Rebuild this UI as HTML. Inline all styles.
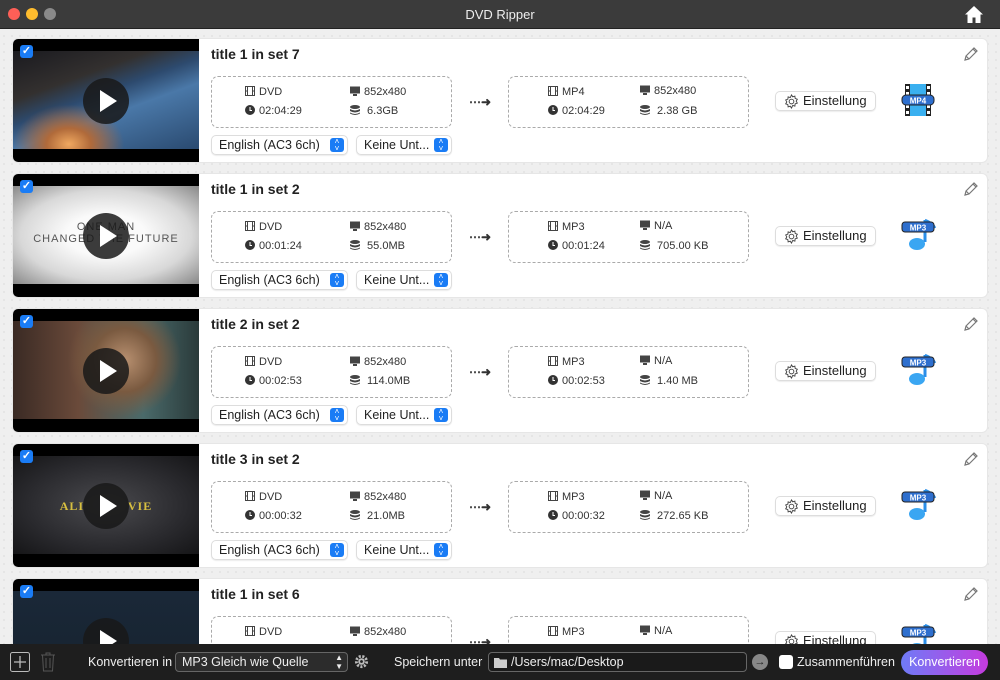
<!DOCTYPE html><html><head><meta charset="utf-8"><style>
*{margin:0;padding:0;box-sizing:border-box}
html{width:1000px;height:680px;overflow:hidden}
body{width:1000px;height:680px;overflow:hidden;font-family:"Liberation Sans",Arial,sans-serif;background:#efefef;background-image:radial-gradient(#e2e2e2 1px,transparent 1px);background-size:8px 8px;position:relative;color:#222}
.tb{position:absolute;left:0;top:0;width:1000px;height:29px;background:#3b3b3b;border-bottom:1px solid #222;color:#eee;font-size:13px;text-align:center;line-height:29px}
.dot{position:absolute;top:8px;width:12px;height:12px;border-radius:50%}
.card{position:absolute;left:12px;width:976px;height:125px;background:#fff;border-radius:6px;overflow:hidden;border:1px solid #e6e6e6}
.th{position:absolute;left:0;top:0;width:186px;height:125px;background:#000}
.img{position:absolute;left:0;top:12px;width:186px;height:98px;overflow:hidden}
.play{position:absolute;left:70px;top:39px;width:46px;height:46px;border-radius:50%;background:rgba(25,25,25,.85)}
.play:after{content:"";position:absolute;left:17px;top:12px;border-left:17px solid #fff;border-top:11px solid transparent;border-bottom:11px solid transparent}
.cb{position:absolute;left:7px;top:6px;width:13px;height:13px;background:#1a7cf5;border-radius:3px;color:#fff;font-size:11px;line-height:13px;text-align:center;font-weight:bold}
.t{position:absolute;left:198px;top:7px;font-size:14px;font-weight:bold;color:#222}
.box{position:absolute;top:37px;width:241px;height:52px;border:1px dashed #aaa;border-radius:7px;font-size:11px;color:#333}
.box span{position:absolute}
.ic{display:inline-block;width:10px;height:10px;vertical-align:-1px;margin-right:4px}
.arr{position:absolute;left:456px;top:56px;font-size:12px;color:#333;font-weight:bold}
.btn{position:absolute;left:762px;top:52px;width:101px;height:20px;border:1px solid #ddd;border-radius:5px;font-size:13px;line-height:18px;padding-left:27px;color:#222;box-shadow:0 1px 1px rgba(0,0,0,.08)}
.dd{position:absolute;top:96px;height:20px;border:1px solid #ddd;border-radius:5px;font-size:12.5px;line-height:18px;padding-left:7px;box-shadow:0 1px 1px rgba(0,0,0,.08)}
.ud{position:absolute;right:3px;top:2px;width:14px;height:14px;background:#1a7cf5;border-radius:3px;color:#fff;font-size:8px;line-height:7px;text-align:center}
.pen{position:absolute;left:950px;top:7px}
.fmt{position:absolute;left:888px;top:44px}
.bot{position:absolute;left:0;top:644px;width:1000px;height:36px;background:#1e1e1e;color:#eee;font-size:12.5px;z-index:5}
.bot>*{position:absolute}
</style></head><body>
<div class="tb">DVD Ripper
<div class="dot" style="left:8px;background:#fe5f57"></div><div class="dot" style="left:26px;background:#febc2e"></div><div class="dot" style="left:44px;background:#8a8a8a"></div>
<svg style="position:absolute;left:964px;top:5px" width="20" height="19" viewBox="0 0 20 19"><path d="M10 1L1 9.5h2.5V18h5v-5.5h3V18h5V9.5H19z" fill="#fff"/></svg></div>

<div class="card" style="top:38px">
<div class="th"><div class="img" style="background:radial-gradient(ellipse at 30% 95%,#f0a860 0%,#b06a3a 12%,transparent 30%),linear-gradient(160deg,#1a1a1f 0%,#33302f 30%,#2d4a6e 45%,#4a78a8 60%,#2a4a70 100%)"></div><div class="play"></div><div class="cb">✓</div></div>
<div class="t">title 1 in set 7</div>
<div class="box" style="left:198px"><span style="left:33px;top:9px"><svg class="ic" viewBox="0 0 10 10"><rect x="0.5" y="0.5" width="9" height="9" fill="none" stroke="#444"/><path d="M2.5 0v10M7.5 0v10M0 5h2.5M7.5 5H10" stroke="#444"/></svg>DVD</span><span style="left:138px;top:9px"><svg class="ic" viewBox="0 0 10 10"><rect x="0" y="0.5" width="10" height="7" fill="#444"/><rect x="3" y="8" width="4" height="2" fill="#444"/></svg>852x480</span><span style="left:33px;top:28px"><svg class="ic" viewBox="0 0 10 10"><circle cx="5" cy="5" r="5" fill="#333"/><path d="M5 2v3.5h2" stroke="#fff" fill="none"/></svg>02:04:29</span><span style="left:138px;top:28px"><svg class="ic" viewBox="0 0 10 10"><ellipse cx="5" cy="2" rx="5" ry="2" fill="#444"/><path d="M0 4q5 3 10 0v2q-5 3-10 0zM0 7.5q5 3 10 0v1q-5 3-10 0z" fill="#444"/></svg>&nbsp;6.3GB</span></div>
<div class="arr">⋯➜</div>
<div class="box" style="left:495px"><span style="left:39px;top:9px"><svg class="ic" viewBox="0 0 10 10"><rect x="0.5" y="0.5" width="9" height="9" fill="none" stroke="#444"/><path d="M2.5 0v10M7.5 0v10M0 5h2.5M7.5 5H10" stroke="#444"/></svg>MP4</span><span style="left:131px;top:8px"><svg class="ic" viewBox="0 0 10 10"><rect x="0" y="0.5" width="10" height="7" fill="#444"/><rect x="3" y="8" width="4" height="2" fill="#444"/></svg>852x480</span><span style="left:39px;top:28px"><svg class="ic" viewBox="0 0 10 10"><circle cx="5" cy="5" r="5" fill="#333"/><path d="M5 2v3.5h2" stroke="#fff" fill="none"/></svg>02:04:29</span><span style="left:131px;top:28px"><svg class="ic" viewBox="0 0 10 10"><ellipse cx="5" cy="2" rx="5" ry="2" fill="#444"/><path d="M0 4q5 3 10 0v2q-5 3-10 0zM0 7.5q5 3 10 0v1q-5 3-10 0z" fill="#444"/></svg>&nbsp;2.38 GB</span></div>
<div class="btn"><svg style="position:absolute;left:8px;top:2px" width="15" height="15" viewBox="0 0 16 16"><circle cx="8" cy="8" r="2.5" fill="none" stroke="#444"/><path d="M8 1l1.3 2 2.3-.7.3 2.4 2.3.9-1.2 2 1.2 2.1-2.3.8-.3 2.4-2.3-.7L8 15l-1.3-2-2.3.7-.3-2.4-2.3-.8 1.2-2.1-1.2-2 2.3-.9.3-2.4 2.3.7z" fill="none" stroke="#444"/></svg>Einstellung</div>
<div class="dd" style="left:198px;width:137px">English (AC3 6ch)<div class="ud">˄<br>˅</div></div>
<div class="dd" style="left:343px;width:96px">Keine Unt...<div class="ud">˄<br>˅</div></div>
<svg class="pen" width="16" height="16" viewBox="0 0 16 16"><path d="M2 14l1-4L11 2l3 3-8 8zM10 3l3 3M3 10l3 3" fill="none" stroke="#777" stroke-width="1.2"/></svg>
<svg class="fmt" width="34" height="34" viewBox="0 0 34 34"><rect x="4" y="1" width="26" height="32" fill="#222"/><rect x="9" y="1" width="16" height="32" fill="#3ab0f0"/><path d="M5 3h3v3H5zM5 9h3v3H5zM5 22h3v3H5zM5 28h3v3H5zM26 3h3v3h-3zM26 9h3v3h-3zM26 22h3v3h-3zM26 28h3v3h-3z" fill="#fff"/><rect x="1" y="12" width="32" height="10" rx="4" fill="#2e6fce" stroke="#222"/><text x="17" y="20.5" font-size="8" font-weight="bold" fill="#fff" text-anchor="middle" font-family="Liberation Sans">MP4</text></svg>
</div>

<div class="card" style="top:173px">
<div class="th"><div class="img" style="background:radial-gradient(ellipse at center,#fafafa 30%,#d8d8d8 65%,#888 100%)"><div style="position:absolute;left:0;width:186px;top:35px;text-align:center;font-size:11px;letter-spacing:1px;color:#555;line-height:12px">ONE MAN<br>CHANGED THE FUTURE</div></div><div class="play"></div><div class="cb">✓</div></div>
<div class="t">title 1 in set 2</div>
<div class="box" style="left:198px"><span style="left:33px;top:9px"><svg class="ic" viewBox="0 0 10 10"><rect x="0.5" y="0.5" width="9" height="9" fill="none" stroke="#444"/><path d="M2.5 0v10M7.5 0v10M0 5h2.5M7.5 5H10" stroke="#444"/></svg>DVD</span><span style="left:138px;top:9px"><svg class="ic" viewBox="0 0 10 10"><rect x="0" y="0.5" width="10" height="7" fill="#444"/><rect x="3" y="8" width="4" height="2" fill="#444"/></svg>852x480</span><span style="left:33px;top:28px"><svg class="ic" viewBox="0 0 10 10"><circle cx="5" cy="5" r="5" fill="#333"/><path d="M5 2v3.5h2" stroke="#fff" fill="none"/></svg>00:01:24</span><span style="left:138px;top:28px"><svg class="ic" viewBox="0 0 10 10"><ellipse cx="5" cy="2" rx="5" ry="2" fill="#444"/><path d="M0 4q5 3 10 0v2q-5 3-10 0zM0 7.5q5 3 10 0v1q-5 3-10 0z" fill="#444"/></svg>&nbsp;55.0MB</span></div>
<div class="arr">⋯➜</div>
<div class="box" style="left:495px"><span style="left:39px;top:9px"><svg class="ic" viewBox="0 0 10 10"><rect x="0.5" y="0.5" width="9" height="9" fill="none" stroke="#444"/><path d="M2.5 0v10M7.5 0v10M0 5h2.5M7.5 5H10" stroke="#444"/></svg>MP3</span><span style="left:131px;top:8px"><svg class="ic" viewBox="0 0 10 10"><rect x="0" y="0.5" width="10" height="7" fill="#444"/><rect x="3" y="8" width="4" height="2" fill="#444"/></svg>N/A</span><span style="left:39px;top:28px"><svg class="ic" viewBox="0 0 10 10"><circle cx="5" cy="5" r="5" fill="#333"/><path d="M5 2v3.5h2" stroke="#fff" fill="none"/></svg>00:01:24</span><span style="left:131px;top:28px"><svg class="ic" viewBox="0 0 10 10"><ellipse cx="5" cy="2" rx="5" ry="2" fill="#444"/><path d="M0 4q5 3 10 0v2q-5 3-10 0zM0 7.5q5 3 10 0v1q-5 3-10 0z" fill="#444"/></svg>&nbsp;705.00 KB</span></div>
<div class="btn"><svg style="position:absolute;left:8px;top:2px" width="15" height="15" viewBox="0 0 16 16"><circle cx="8" cy="8" r="2.5" fill="none" stroke="#444"/><path d="M8 1l1.3 2 2.3-.7.3 2.4 2.3.9-1.2 2 1.2 2.1-2.3.8-.3 2.4-2.3-.7L8 15l-1.3-2-2.3.7-.3-2.4-2.3-.8 1.2-2.1-1.2-2 2.3-.9.3-2.4 2.3.7z" fill="none" stroke="#444"/></svg>Einstellung</div>
<div class="dd" style="left:198px;width:137px">English (AC3 6ch)<div class="ud">˄<br>˅</div></div>
<div class="dd" style="left:343px;width:96px">Keine Unt...<div class="ud">˄<br>˅</div></div>
<svg class="pen" width="16" height="16" viewBox="0 0 16 16"><path d="M2 14l1-4L11 2l3 3-8 8zM10 3l3 3M3 10l3 3" fill="none" stroke="#777" stroke-width="1.2"/></svg>
<svg class="fmt" width="36" height="34" viewBox="0 0 36 34"><path d="M24 2v22" stroke="#2a8ee8" stroke-width="3"/><path d="M24 2q8 3 10 8" stroke="#2a8ee8" stroke-width="2.5" fill="none"/><ellipse cx="16" cy="26" rx="8" ry="6" fill="#3aa6f2"/><rect x="1" y="4" width="32" height="10" rx="3" fill="#2e6fce" stroke="#222"/><text x="17" y="12.5" font-size="8" font-weight="bold" fill="#fff" text-anchor="middle" font-family="Liberation Sans">MP3</text></svg>
</div>

<div class="card" style="top:308px">
<div class="th"><div class="img" style="background:radial-gradient(circle at 60% 40%,#b89070 0%,#7a5a40 25%,transparent 45%),linear-gradient(90deg,#3a2a24,#6a4a3a 35%,#4a6a6a 70%,#2a3a3a)"></div><div class="play"></div><div class="cb">✓</div></div>
<div class="t">title 2 in set 2</div>
<div class="box" style="left:198px"><span style="left:33px;top:9px"><svg class="ic" viewBox="0 0 10 10"><rect x="0.5" y="0.5" width="9" height="9" fill="none" stroke="#444"/><path d="M2.5 0v10M7.5 0v10M0 5h2.5M7.5 5H10" stroke="#444"/></svg>DVD</span><span style="left:138px;top:9px"><svg class="ic" viewBox="0 0 10 10"><rect x="0" y="0.5" width="10" height="7" fill="#444"/><rect x="3" y="8" width="4" height="2" fill="#444"/></svg>852x480</span><span style="left:33px;top:28px"><svg class="ic" viewBox="0 0 10 10"><circle cx="5" cy="5" r="5" fill="#333"/><path d="M5 2v3.5h2" stroke="#fff" fill="none"/></svg>00:02:53</span><span style="left:138px;top:28px"><svg class="ic" viewBox="0 0 10 10"><ellipse cx="5" cy="2" rx="5" ry="2" fill="#444"/><path d="M0 4q5 3 10 0v2q-5 3-10 0zM0 7.5q5 3 10 0v1q-5 3-10 0z" fill="#444"/></svg>&nbsp;114.0MB</span></div>
<div class="arr">⋯➜</div>
<div class="box" style="left:495px"><span style="left:39px;top:9px"><svg class="ic" viewBox="0 0 10 10"><rect x="0.5" y="0.5" width="9" height="9" fill="none" stroke="#444"/><path d="M2.5 0v10M7.5 0v10M0 5h2.5M7.5 5H10" stroke="#444"/></svg>MP3</span><span style="left:131px;top:8px"><svg class="ic" viewBox="0 0 10 10"><rect x="0" y="0.5" width="10" height="7" fill="#444"/><rect x="3" y="8" width="4" height="2" fill="#444"/></svg>N/A</span><span style="left:39px;top:28px"><svg class="ic" viewBox="0 0 10 10"><circle cx="5" cy="5" r="5" fill="#333"/><path d="M5 2v3.5h2" stroke="#fff" fill="none"/></svg>00:02:53</span><span style="left:131px;top:28px"><svg class="ic" viewBox="0 0 10 10"><ellipse cx="5" cy="2" rx="5" ry="2" fill="#444"/><path d="M0 4q5 3 10 0v2q-5 3-10 0zM0 7.5q5 3 10 0v1q-5 3-10 0z" fill="#444"/></svg>&nbsp;1.40 MB</span></div>
<div class="btn"><svg style="position:absolute;left:8px;top:2px" width="15" height="15" viewBox="0 0 16 16"><circle cx="8" cy="8" r="2.5" fill="none" stroke="#444"/><path d="M8 1l1.3 2 2.3-.7.3 2.4 2.3.9-1.2 2 1.2 2.1-2.3.8-.3 2.4-2.3-.7L8 15l-1.3-2-2.3.7-.3-2.4-2.3-.8 1.2-2.1-1.2-2 2.3-.9.3-2.4 2.3.7z" fill="none" stroke="#444"/></svg>Einstellung</div>
<div class="dd" style="left:198px;width:137px">English (AC3 6ch)<div class="ud">˄<br>˅</div></div>
<div class="dd" style="left:343px;width:96px">Keine Unt...<div class="ud">˄<br>˅</div></div>
<svg class="pen" width="16" height="16" viewBox="0 0 16 16"><path d="M2 14l1-4L11 2l3 3-8 8zM10 3l3 3M3 10l3 3" fill="none" stroke="#777" stroke-width="1.2"/></svg>
<svg class="fmt" width="36" height="34" viewBox="0 0 36 34"><path d="M24 2v22" stroke="#2a8ee8" stroke-width="3"/><path d="M24 2q8 3 10 8" stroke="#2a8ee8" stroke-width="2.5" fill="none"/><ellipse cx="16" cy="26" rx="8" ry="6" fill="#3aa6f2"/><rect x="1" y="4" width="32" height="10" rx="3" fill="#2e6fce" stroke="#222"/><text x="17" y="12.5" font-size="8" font-weight="bold" fill="#fff" text-anchor="middle" font-family="Liberation Sans">MP3</text></svg>
</div>

<div class="card" style="top:443px">
<div class="th"><div class="img" style="background:radial-gradient(ellipse at center,#4a4a4e 0%,#2a2a2e 60%,#151517 100%)"><div style="position:absolute;left:0;width:186px;top:43px;text-align:center;font-family:'Liberation Serif',serif;font-size:12px;font-weight:bold;color:#d8c040;letter-spacing:1px">ALI &nbsp;&nbsp;&nbsp;&nbsp;&nbsp;&nbsp;&nbsp;&nbsp;&nbsp; VIE</div></div><div class="play"></div><div class="cb">✓</div></div>
<div class="t">title 3 in set 2</div>
<div class="box" style="left:198px"><span style="left:33px;top:9px"><svg class="ic" viewBox="0 0 10 10"><rect x="0.5" y="0.5" width="9" height="9" fill="none" stroke="#444"/><path d="M2.5 0v10M7.5 0v10M0 5h2.5M7.5 5H10" stroke="#444"/></svg>DVD</span><span style="left:138px;top:9px"><svg class="ic" viewBox="0 0 10 10"><rect x="0" y="0.5" width="10" height="7" fill="#444"/><rect x="3" y="8" width="4" height="2" fill="#444"/></svg>852x480</span><span style="left:33px;top:28px"><svg class="ic" viewBox="0 0 10 10"><circle cx="5" cy="5" r="5" fill="#333"/><path d="M5 2v3.5h2" stroke="#fff" fill="none"/></svg>00:00:32</span><span style="left:138px;top:28px"><svg class="ic" viewBox="0 0 10 10"><ellipse cx="5" cy="2" rx="5" ry="2" fill="#444"/><path d="M0 4q5 3 10 0v2q-5 3-10 0zM0 7.5q5 3 10 0v1q-5 3-10 0z" fill="#444"/></svg>&nbsp;21.0MB</span></div>
<div class="arr">⋯➜</div>
<div class="box" style="left:495px"><span style="left:39px;top:9px"><svg class="ic" viewBox="0 0 10 10"><rect x="0.5" y="0.5" width="9" height="9" fill="none" stroke="#444"/><path d="M2.5 0v10M7.5 0v10M0 5h2.5M7.5 5H10" stroke="#444"/></svg>MP3</span><span style="left:131px;top:8px"><svg class="ic" viewBox="0 0 10 10"><rect x="0" y="0.5" width="10" height="7" fill="#444"/><rect x="3" y="8" width="4" height="2" fill="#444"/></svg>N/A</span><span style="left:39px;top:28px"><svg class="ic" viewBox="0 0 10 10"><circle cx="5" cy="5" r="5" fill="#333"/><path d="M5 2v3.5h2" stroke="#fff" fill="none"/></svg>00:00:32</span><span style="left:131px;top:28px"><svg class="ic" viewBox="0 0 10 10"><ellipse cx="5" cy="2" rx="5" ry="2" fill="#444"/><path d="M0 4q5 3 10 0v2q-5 3-10 0zM0 7.5q5 3 10 0v1q-5 3-10 0z" fill="#444"/></svg>&nbsp;272.65 KB</span></div>
<div class="btn"><svg style="position:absolute;left:8px;top:2px" width="15" height="15" viewBox="0 0 16 16"><circle cx="8" cy="8" r="2.5" fill="none" stroke="#444"/><path d="M8 1l1.3 2 2.3-.7.3 2.4 2.3.9-1.2 2 1.2 2.1-2.3.8-.3 2.4-2.3-.7L8 15l-1.3-2-2.3.7-.3-2.4-2.3-.8 1.2-2.1-1.2-2 2.3-.9.3-2.4 2.3.7z" fill="none" stroke="#444"/></svg>Einstellung</div>
<div class="dd" style="left:198px;width:137px">English (AC3 6ch)<div class="ud">˄<br>˅</div></div>
<div class="dd" style="left:343px;width:96px">Keine Unt...<div class="ud">˄<br>˅</div></div>
<svg class="pen" width="16" height="16" viewBox="0 0 16 16"><path d="M2 14l1-4L11 2l3 3-8 8zM10 3l3 3M3 10l3 3" fill="none" stroke="#777" stroke-width="1.2"/></svg>
<svg class="fmt" width="36" height="34" viewBox="0 0 36 34"><path d="M24 2v22" stroke="#2a8ee8" stroke-width="3"/><path d="M24 2q8 3 10 8" stroke="#2a8ee8" stroke-width="2.5" fill="none"/><ellipse cx="16" cy="26" rx="8" ry="6" fill="#3aa6f2"/><rect x="1" y="4" width="32" height="10" rx="3" fill="#2e6fce" stroke="#222"/><text x="17" y="12.5" font-size="8" font-weight="bold" fill="#fff" text-anchor="middle" font-family="Liberation Sans">MP3</text></svg>
</div>

<div class="card" style="top:578px;height:66px;border-bottom:0;border-radius:6px 6px 0 0">
<div class="th"><div class="img" style="background:linear-gradient(180deg,#1a2838,#16222e)"></div><div class="play"></div><div class="cb">✓</div></div>
<div class="t">title 1 in set 6</div>
<div class="box" style="left:198px"><span style="left:33px;top:9px"><svg class="ic" viewBox="0 0 10 10"><rect x="0.5" y="0.5" width="9" height="9" fill="none" stroke="#444"/><path d="M2.5 0v10M7.5 0v10M0 5h2.5M7.5 5H10" stroke="#444"/></svg>DVD</span><span style="left:138px;top:9px"><svg class="ic" viewBox="0 0 10 10"><rect x="0" y="0.5" width="10" height="7" fill="#444"/><rect x="3" y="8" width="4" height="2" fill="#444"/></svg>852x480</span></div>
<div class="arr">⋯➜</div>
<div class="box" style="left:495px"><span style="left:39px;top:9px"><svg class="ic" viewBox="0 0 10 10"><rect x="0.5" y="0.5" width="9" height="9" fill="none" stroke="#444"/><path d="M2.5 0v10M7.5 0v10M0 5h2.5M7.5 5H10" stroke="#444"/></svg>MP3</span><span style="left:131px;top:8px"><svg class="ic" viewBox="0 0 10 10"><rect x="0" y="0.5" width="10" height="7" fill="#444"/><rect x="3" y="8" width="4" height="2" fill="#444"/></svg>N/A</span></div>
<div class="btn"><svg style="position:absolute;left:8px;top:2px" width="15" height="15" viewBox="0 0 16 16"><circle cx="8" cy="8" r="2.5" fill="none" stroke="#444"/><path d="M8 1l1.3 2 2.3-.7.3 2.4 2.3.9-1.2 2 1.2 2.1-2.3.8-.3 2.4-2.3-.7L8 15l-1.3-2-2.3.7-.3-2.4-2.3-.8 1.2-2.1-1.2-2 2.3-.9.3-2.4 2.3.7z" fill="none" stroke="#444"/></svg>Einstellung</div>
<svg class="pen" width="16" height="16" viewBox="0 0 16 16"><path d="M2 14l1-4L11 2l3 3-8 8zM10 3l3 3M3 10l3 3" fill="none" stroke="#777" stroke-width="1.2"/></svg>
<svg class="fmt" width="36" height="34" viewBox="0 0 36 34"><path d="M24 2v22" stroke="#2a8ee8" stroke-width="3"/><path d="M24 2q8 3 10 8" stroke="#2a8ee8" stroke-width="2.5" fill="none"/><ellipse cx="16" cy="26" rx="8" ry="6" fill="#3aa6f2"/><rect x="1" y="4" width="32" height="10" rx="3" fill="#2e6fce" stroke="#222"/><text x="17" y="12.5" font-size="8" font-weight="bold" fill="#fff" text-anchor="middle" font-family="Liberation Sans">MP3</text></svg>
</div>

<div class="bot">
<svg style="left:10px;top:8px" width="20" height="20" viewBox="0 0 20 20"><rect x="0.5" y="0.5" width="19" height="19" rx="2" fill="none" stroke="#bbb"/><path d="M10 4v12M4 10h12" stroke="#bbb" stroke-width="1.3"/></svg>
<svg style="left:40px;top:8px" width="16" height="20" viewBox="0 0 16 20"><path d="M1 3h14M6 3V1h4v2M2.5 3l1 16h9l1-16M6 6v10M10 6v10" fill="none" stroke="#555"/></svg>
<div style="left:88px;top:11px">Konvertieren in</div>
<div style="left:175px;top:8px;width:173px;height:20px;border:1px solid #666;border-radius:4px;background:#2c2c2c;padding-left:6px;line-height:18px">MP3 Gleich wie Quelle<span style="position:absolute;right:4px;top:0;font-size:8px;line-height:9px">▲<br>▼</span></div>
<svg style="left:354px;top:10px" width="15" height="15" viewBox="0 0 16 16"><circle cx="8" cy="8" r="5.5" fill="none" stroke="#bbb" stroke-width="3" stroke-dasharray="2.2 1.6"/><circle cx="8" cy="8" r="3.5" fill="#bbb"/><circle cx="8" cy="8" r="1.5" fill="#1e1e1e"/></svg>
<div style="left:394px;top:11px">Speichern unter</div>
<div style="left:488px;top:8px;width:259px;height:20px;border:1px solid #666;border-radius:4px;background:#1a1a1a;padding-left:22px;line-height:18px">/Users/mac/Desktop<svg style="position:absolute;left:5px;top:4px" width="13" height="11" viewBox="0 0 13 11"><path d="M0 1h5l1 1.5h7V11H0z" fill="#ccc"/></svg></div>
<div style="left:752px;top:10px;width:16px;height:16px;border-radius:50%;background:#888;color:#222;font-size:11px;line-height:16px;text-align:center;font-weight:bold">→</div>
<div style="left:779px;top:11px;width:14px;height:14px;border-radius:3px;background:#fff"></div>
<div style="left:797px;top:11px">Zusammenführen</div>
<div style="left:901px;top:6px;width:87px;height:25px;border-radius:13px;background:linear-gradient(90deg,#6f7bf7,#c53bde);line-height:25px;text-align:center;color:#fff">Konvertieren</div>
</div>
</body></html>
